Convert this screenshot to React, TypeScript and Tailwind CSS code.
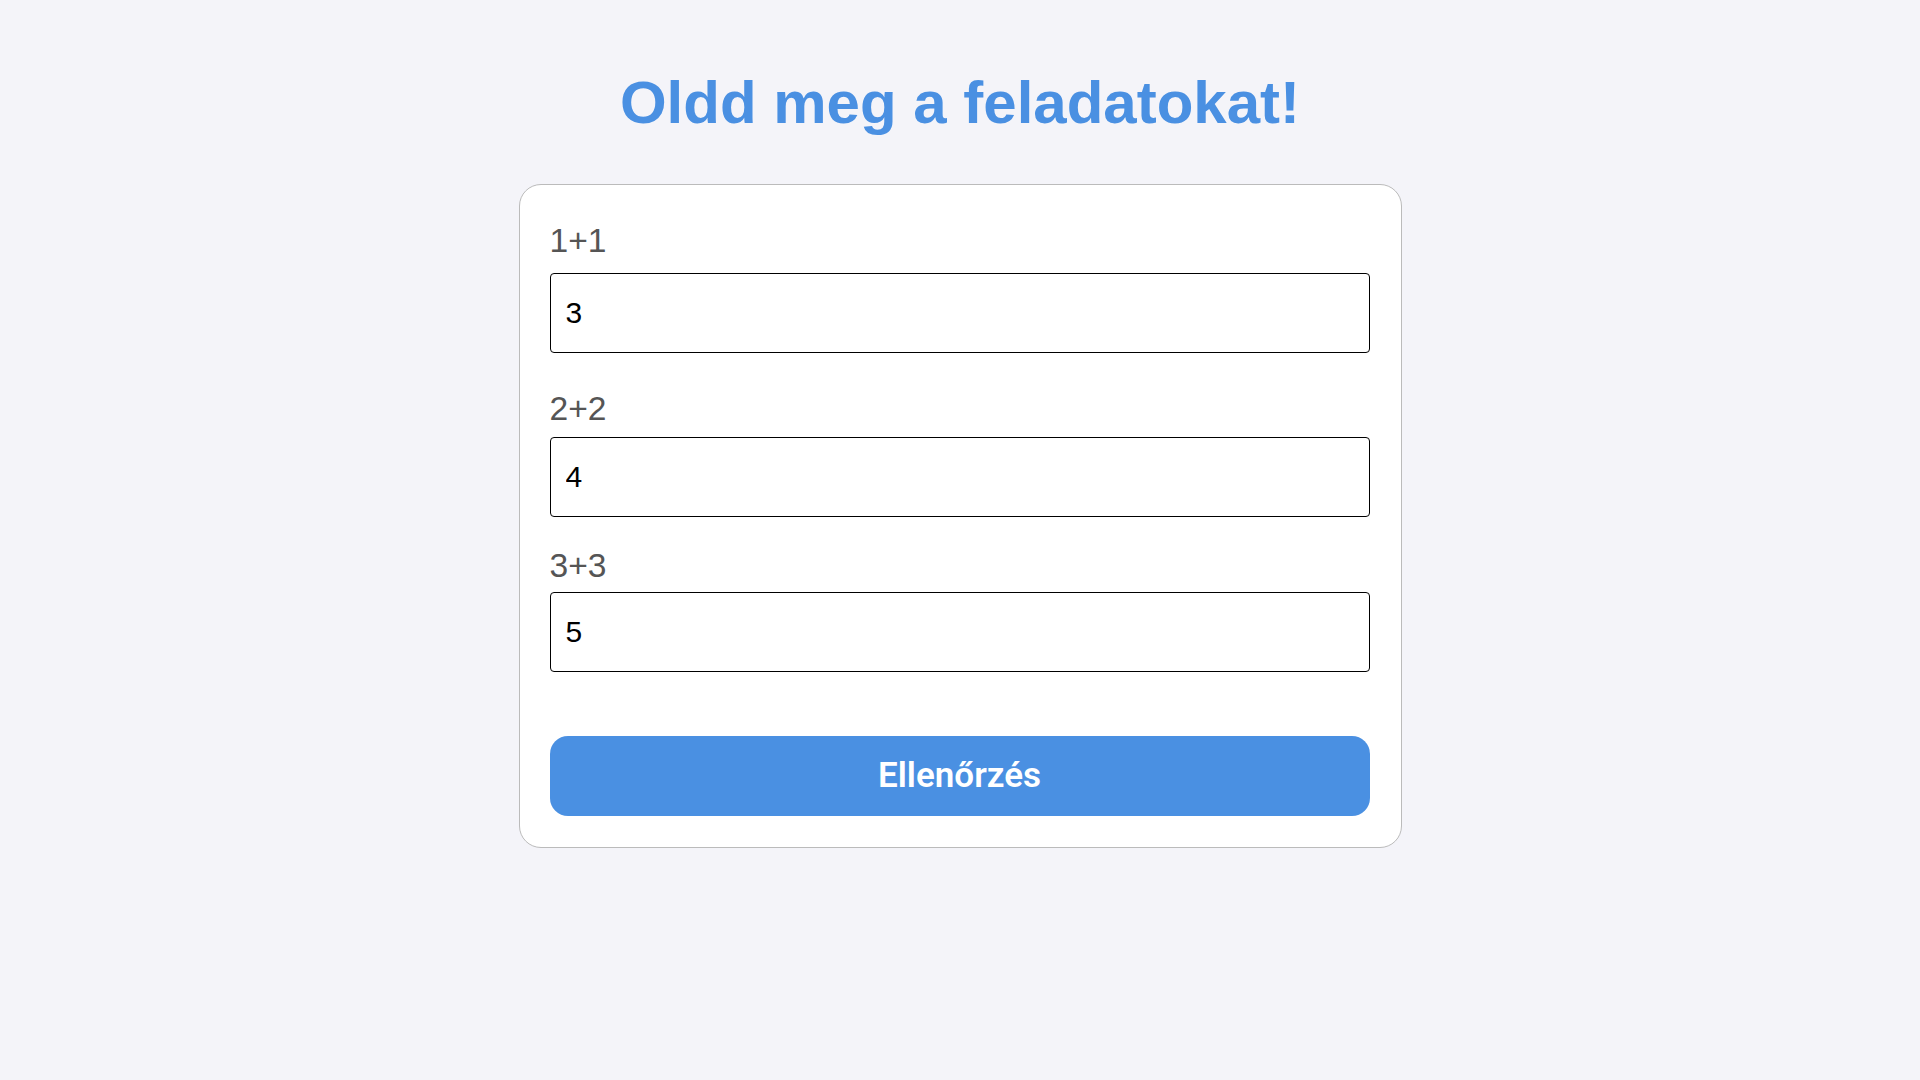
const tasks = [
  { label: '1+1', value: '3', labelMt: 'mt-0', inputMt: 'mt-[13px]' },
  { label: '2+2', value: '4', labelMt: 'mt-[37px]', inputMt: 'mt-[9px]' },
  { label: '3+3', value: '5', labelMt: 'mt-[30px]', inputMt: 'mt-[7px]' },
];

export default function App() {
  return (
    <div className="min-h-screen bg-[#f4f4f9] pt-[71px] font-['Liberation_Sans',Arial,sans-serif]">
      <h1 className="text-center text-[60px] leading-[64px] font-bold text-[#4a90e2]">
        Oldd meg a feladatokat!
      </h1>

      <form
        className="mx-auto mt-[49px] w-[883px] rounded-[22px] border border-[#bbbbbb] bg-white pl-[30px] pr-[31px] pt-[37px] pb-[31px]"
        onSubmit={(e) => e.preventDefault()}
      >
        {tasks.map((t) => (
          <div key={t.label} className="flex flex-col">
            <label className={`${t.labelMt} text-[33.6px] leading-[38px] text-[#555555]`}>
              {t.label}
            </label>
            <input
              type="text"
              defaultValue={t.value}
              className={`${t.inputMt} h-[80px] w-full rounded-[4px] border border-black bg-white px-[15px] text-[30px] text-black outline-none`}
            />
          </div>
        ))}

        <button
          type="submit"
          className="mt-[64px] h-[80px] w-full rounded-[18px] bg-[#4a90e2] font-['Roboto',sans-serif] text-[35px] font-semibold text-white"
        >
          Ellenőrzés
        </button>
      </form>
    </div>
  );
}
